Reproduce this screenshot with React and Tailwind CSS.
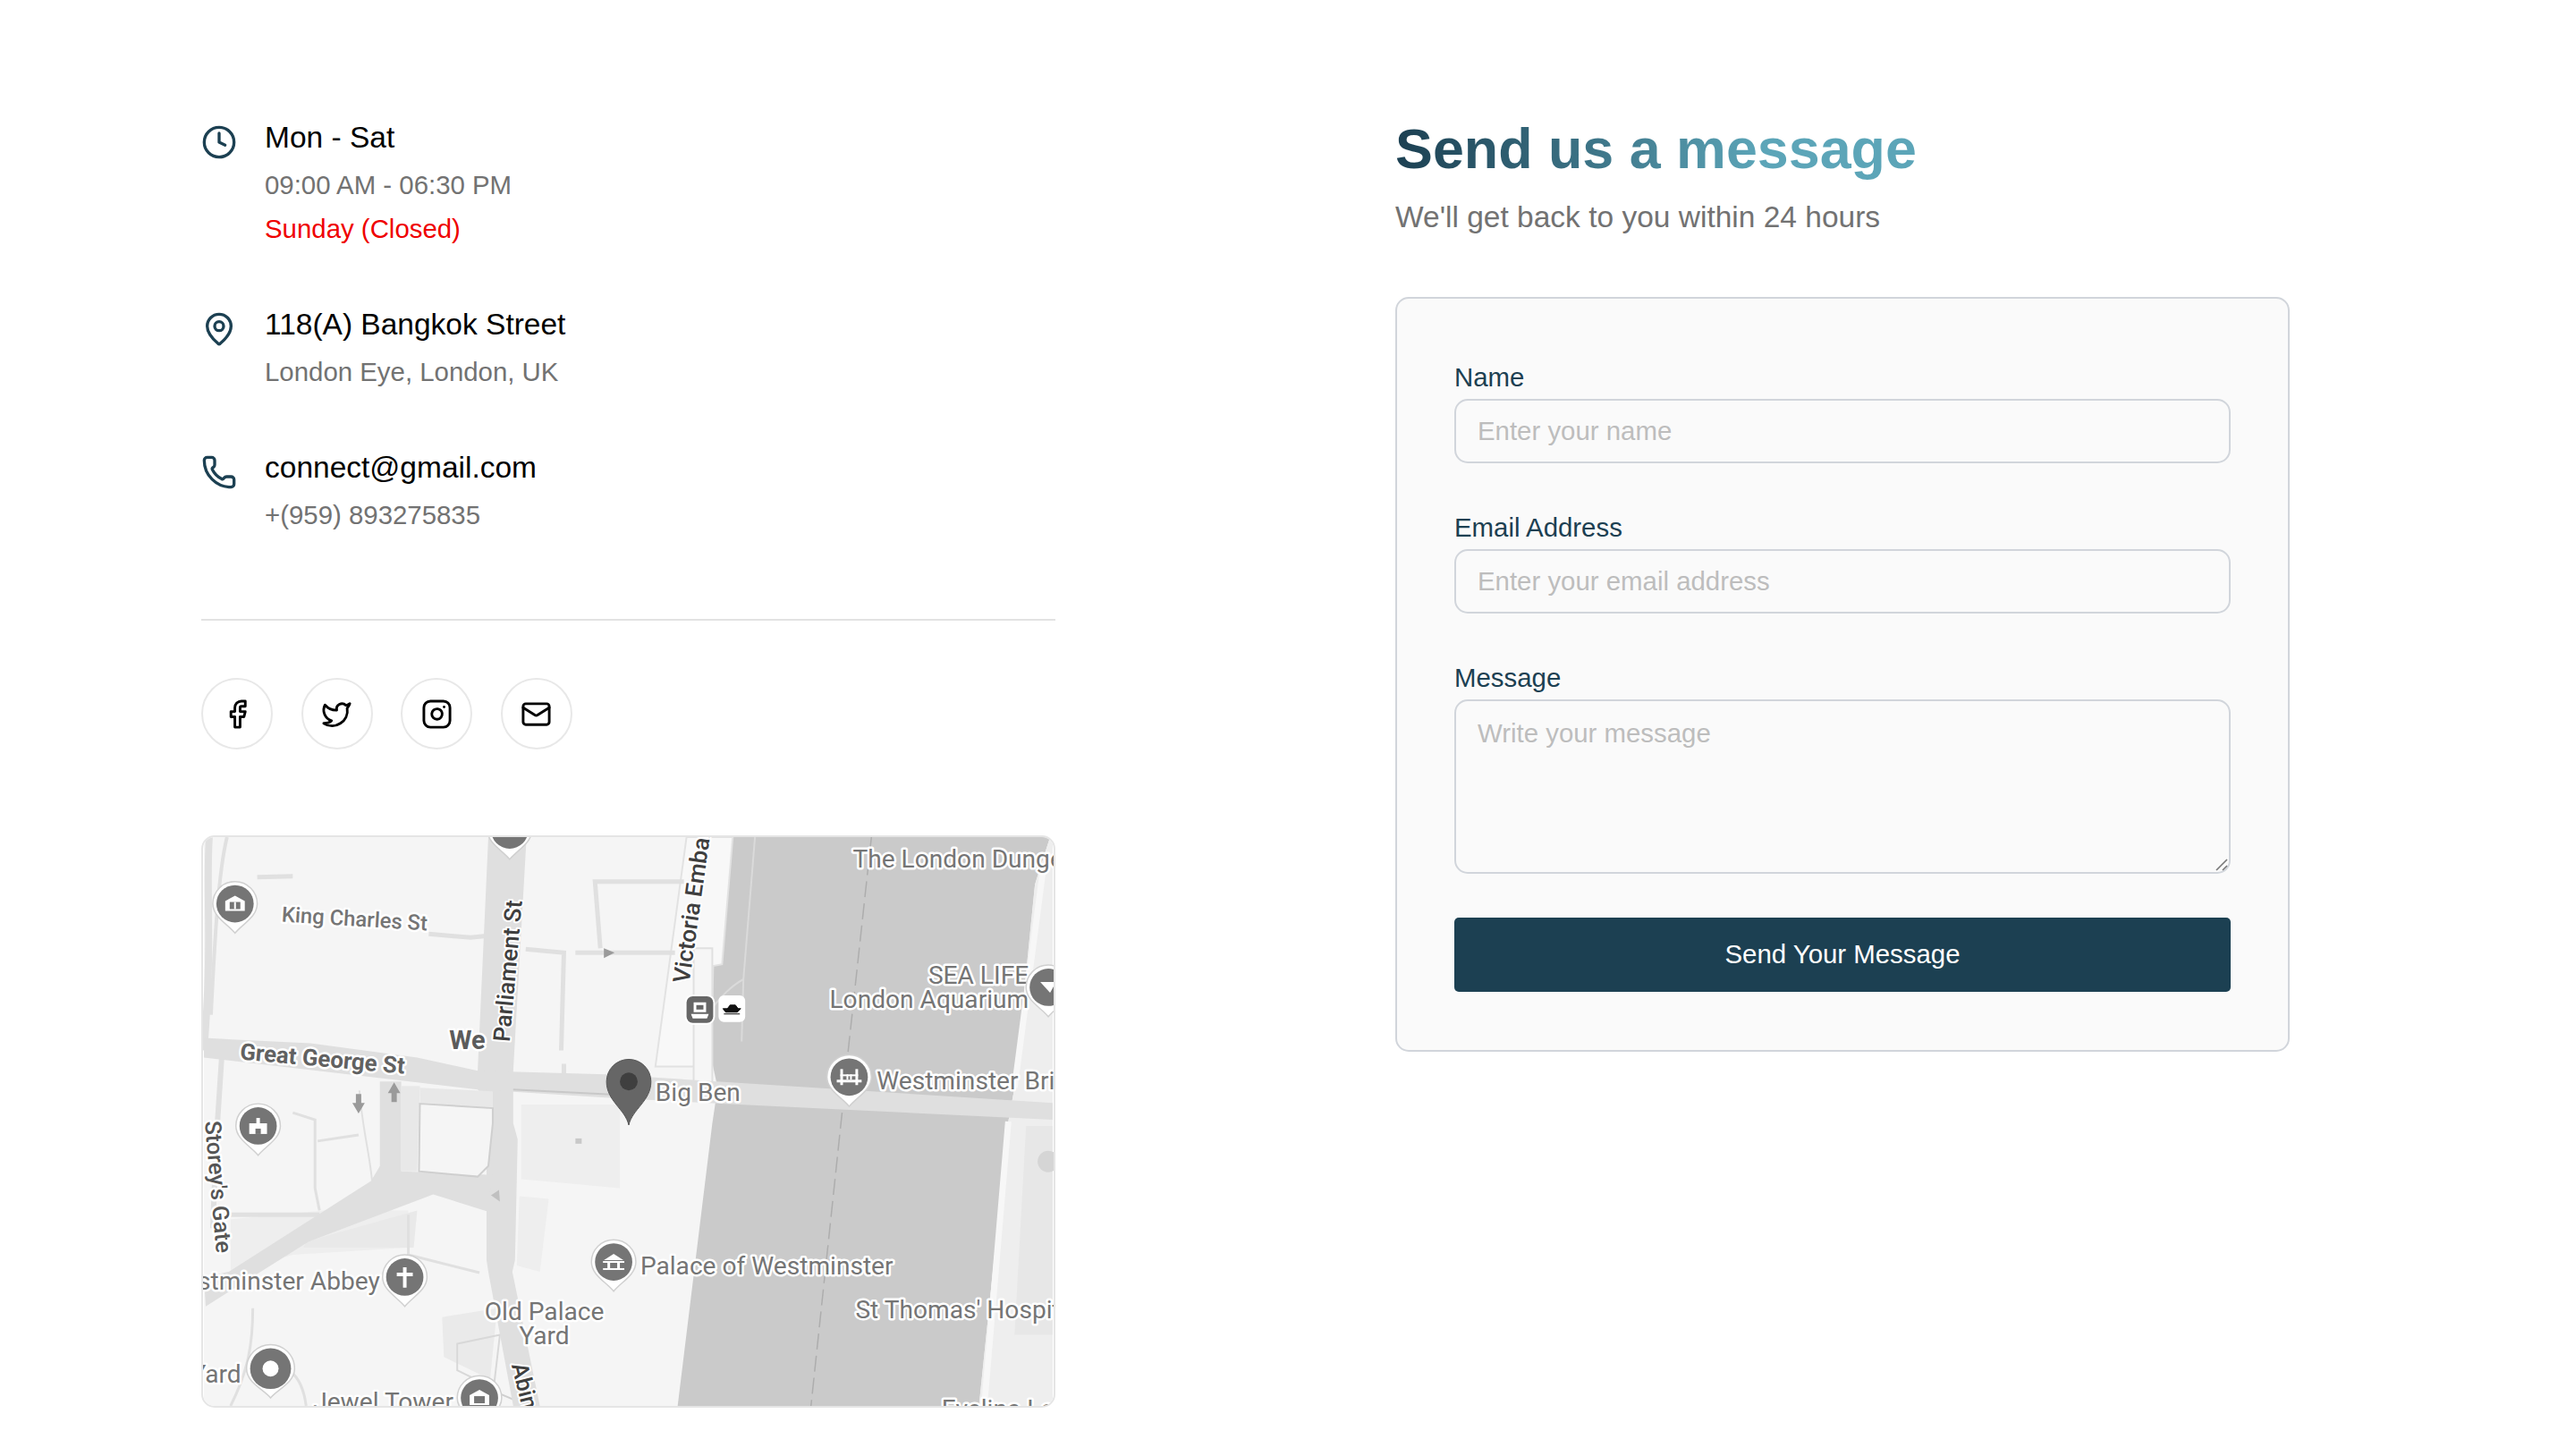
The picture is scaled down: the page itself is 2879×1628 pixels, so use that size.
import React from "react";
import { Clock, MapPin, Phone, Facebook, Twitter, Instagram, Mail } from "lucide-react";

const socials = [Facebook, Twitter, Instagram, Mail];

const InfoRow = ({ icon: Icon, title, children }) => (
  <div className="flex gap-[31px]">
    <Icon size={40} strokeWidth={2} className="mt-[9px] shrink-0 text-[#1c4052]" />
    <div>
      <p className="text-[33.5px] leading-[48px] text-black">{title}</p>
      {children}
    </div>
  </div>
);

const Sub = ({ className = "text-[#727272]", first, children }) => (
  <p className={`text-[29.4px] leading-[44px] ${first ? "mt-[7px]" : "mt-[5px]"} ${className}`}>{children}</p>
);

const Label = ({ x, y, size = 28.3, fill = "#757575", weight = 400, rotate, anchor = "start", halo = 5, children }) => (
  <text
    x={x}
    y={y}
    fontFamily="Roboto, sans-serif"
    fontSize={size}
    fontWeight={weight}
    fill={fill}
    stroke="#fff"
    strokeWidth={halo}
    paintOrder="stroke"
    strokeLinejoin="round"
    textAnchor={anchor}
    transform={rotate ? `rotate(${rotate} ${x} ${y})` : undefined}
  >
    {children}
  </text>
);

const Pin = ({ x, y, r = 21, tail = 31, children }) => (
  <g transform={`translate(${x} ${y})`}>
    <path
      d={`M${-r - 4} 0 A${r + 4} ${r + 4} 0 1 1 ${r + 4} 0 C${r + 4} ${r * 0.7} 8 ${tail - 8} 0 ${tail + 2} C-8 ${tail - 8} ${-r - 4} ${r * 0.7} ${-r - 4} 0Z`}
      fill="#fff"
      stroke="#d0d0d0"
      strokeWidth="1.5"
    />
    <circle r={r} fill="#757575" />
    {children}
  </g>
);

const MapArt = () => (
  <svg viewBox="0 0 955 640" className="block h-full w-full">
    <rect width="955" height="640" fill="#f5f5f5" />
    {/* river */}
    <path d="M595 0H952L935 53 912 282 905 320 872 640H533L572 322 578 282 570 245 573 145 583 143Z" fill="#cacaca" />
    {/* far bank and grounds */}
    <path d="M952 0H955V640H872L905 320 912 282 935 53Z" fill="#eeeeee" />
    <path d="M945 30L912 282M905 320L878 640" stroke="#f7f7f7" strokeWidth="7" fill="none" />
    <path d="M925 325L955 325V560L912 560Z" fill="#e7e7e7" />
    <circle cx="950" cy="365" r="12" fill="#d5d5d5" />
    <path d="M357 301L468 301 468 395 357 385Z" fill="#eeeeee" />
    <path d="M355 404L388 407 378 489 352 482Z" fill="#eeeeee" />
    <path d="M30 430L135 420 230 420 230 462 100 470 30 490Z" fill="#eeeeee" />
    <path d="M115 455L240 420 236 462 112 462Z" fill="#e9e9e9" />
    <path d="M268 540L330 530 322 610 270 585Z" fill="#eaeaea" />
    {/* embankment */}
    <path d="M543 0L508 258H570L573 145 583 143 595 0Z" fill="#f8f8f8" stroke="#e2e2e2" strokeWidth="2" />
    <path d="M620 0L607 160 605 230M607 160C592 168 582 180 572 192" stroke="#dadada" strokeWidth="2" fill="none" />
    <path d="M551 125H572V285H551Z" fill="#f6f6f6" stroke="#e0e0e0" strokeWidth="2" />
    {/* small lanes */}
    <g stroke="#e0e0e0" strokeWidth="5" fill="none">
      <path d="M6 0C2 60 10 120 0 240" strokeWidth="8" />
      <path d="M26 0C16 40 12 120 8 200" strokeWidth="4" />
      <path d="M60 45L100 44" />
      <path d="M253 109L300 113 320 111" />
      <path d="M362 126L405 130 402 240M405 255V280" strokeWidth="5" />
      <path d="M440 50L446 125 440 50H540" />
      <path d="M418 130H530" />
      <path d="M20 248L14 340 10 440" strokeWidth="6" />
      <path d="M100 310L125 318 125 395 130 420" strokeWidth="3" />
      <path d="M128 342L174 335" strokeWidth="3" />
      <path d="M175 285C178 330 190 370 190 400" strokeWidth="2" />
      <path d="M30 425H130" />
      <path d="M230 425V480M230 470L310 490" strokeWidth="3" />
      <path d="M55 530C55 570 50 600 30 640" strokeWidth="3" />
      <path d="M60 590C90 592 110 600 115 640" strokeWidth="3" />
      <path d="M285 570L333 560 326 620 285 600Z" strokeWidth="2" fill="none" stroke="#d8d8d8" />
      <path d="M330 625L365 640" strokeWidth="2" stroke="#cfcfcf" />
    </g>
    {/* roads */}
    <g fill="#dfdfdf">
      <path d="M320 0H363L348 263 348 322 353 340 350 476 347 489 378 640H348L320 489 318 476 318 340 325 322 325 300 308 284V263Z" />
      <path d="M0 226L120 232 240 248 308 263 452 267 955 299V318L602 301 452 293 308 284 240 276 0 248Z" />
      <path d="M198 275H222V376L325 380 318 421 258 402 118 455 2 528 0 495 28 489 188 387 198 370Z" />
      <path d="M222 280H243L240 376H222Z" fill="#e8e8e8" />
      <path d="M243 282L325 286V305L243 300Z" fill="#e8e8e8" />
    </g>
    <path d="M243 300L325 305 325 322 320 370 308 382 242 376Z" fill="#f5f5f5" stroke="#cfcfcf" strokeWidth="2" />
    <path d="M348 284L468 290" stroke="#c8c8c8" strokeWidth="2" />
    {/* river centre line */}
    <path d="M751 0L720 285M718 310L683 640" stroke="#adadad" strokeWidth="1.5" strokeDasharray="18 7" fill="none" />
    <g fill="#9a9a9a">
      <path d="M214 298L207 286H211V276H217V286H221Z" transform="rotate(180 214 287)" />
      <path d="M174 311L167 299H171V289H177V299H181Z" />
      <path d="M332 397L323 403 333 410Z" fill="#c0c0c0" />
      <path d="M450 125L462 130 450 136Z" />
      <rect x="418" y="339" width="7" height="6" fill="#c8c8c8" />
    </g>

    {/* street names */}
    <Label x={87} y={95} size={24} weight={500} rotate={3.5}>King Charles St</Label>
    <Label x={344} y={231} size={26.4} weight={500} fill="#3f3f3f" rotate={-85} halo={4}>Parliament St</Label>
    <Label x={276} y={238} size={29} weight={700} fill="#5c5c5c">We</Label>
    <Label x={40} y={250} size={26} weight={700} fill="#616161" rotate={5}>Great George St</Label>
    <Label x={1} y={320} size={25.5} weight={500} fill="#555" rotate={85}>Storey's Gate</Label>
    <Label x={198} y={509} anchor="end">Westminster Abbey</Label>
    <Label x={383} y={543} anchor="middle">Old Palace</Label>
    <Label x={383} y={571} anchor="middle">Yard</Label>
    <Label x={42} y={614} anchor="end">Dean's Yard</Label>
    <Label x={123} y={645}>Jewel Tower</Label>
    <Label x={346} y={594} size={26} weight={500} fill="#3f3f3f" rotate={76} halo={4}>Abingdon St</Label>
    <Label x={546} y={165} size={26.4} weight={500} fill="#3f3f3f" rotate={-82} halo={4}>Victoria Embankment</Label>
    <Label x={730} y={34}>The London Dungeon</Label>
    <Label x={928} y={165} anchor="end">SEA LIFE</Label>
    <Label x={928} y={192} anchor="end">London Aquarium</Label>
    <Label x={757} y={284}>Westminster Bridge</Label>
    <Label x={508} y={297}>Big Ben</Label>
    <Label x={491} y={492}>Palace of Westminster</Label>
    <Label x={733} y={541}>St Thomas' Hospital</Label>
    <Label x={830} y={653}>Evelina London</Label>

    {/* place pins */}
    <Pin x={344} y={-8} />
    <Pin x={35} y={75}>
      <path d="M-11 -3L0 -9 11 -3V8H-11Z" fill="#fff" />
      <rect x="-6" y="-2" width="12" height="8" fill="#757575" />
      <rect x="-1" y="-2" width="2" height="8" fill="#fff" />
    </Pin>
    <Pin x={61} y={325}>
      <rect x="-10" y="-3" width="20" height="12" fill="#fff" />
      <rect x="-2" y="-9" width="4" height="7" fill="#fff" />
      <rect x="-3" y="3" width="6" height="6" fill="#757575" />
    </Pin>
    <Pin x={226} y={495}>
      <path d="M-2 -11H2V-5H9V-1H2V12H-2V-1H-9V-5H-2Z" fill="#fff" />
    </Pin>
    <Pin x={75} y={598} r={23}>
      <circle r={9} fill="#fff" />
    </Pin>
    <Pin x={310} y={631}>
      <path d="M-11 -3L0 -9 11 -3V8H-11Z" fill="#fff" />
      <rect x="-6" y="-2" width="12" height="8" fill="#757575" />
    </Pin>
    <Pin x={461} y={478}>
      <path d="M-11 -2L0 -9 11 -2Z" fill="#fff" />
      <rect x="-12" y="-1" width="24" height="2" fill="#fff" />
      <rect x="-7" y="1" width="3" height="6" fill="#fff" />
      <rect x="4" y="1" width="3" height="6" fill="#fff" />
      <rect x="-12" y="7" width="24" height="2" fill="#fff" />
    </Pin>
    <Pin x={726} y={270}>
      <rect x="-10" y="-9" width="3" height="18" fill="#fff" />
      <rect x="7" y="-9" width="3" height="18" fill="#fff" />
      <rect x="-14" y="3" width="28" height="3" fill="#fff" />
      <rect x="-10" y="-3" width="20" height="2" fill="#fff" />
      <rect x="-3" y="-3" width="2" height="6" fill="#fff" />
      <rect x="1" y="-3" width="2" height="6" fill="#fff" />
    </Pin>
    <Pin x={950} y={169}>
      <path d="M-9 -6H9L2 6Z" fill="#fff" />
    </Pin>

    {/* ferry stop */}
    <rect x="542" y="178" width="32" height="32" rx="8" fill="#666" stroke="#fff" strokeWidth="2" />
    <path d="M551 186H565V197H551ZM548 199H568L566 204H550Z" fill="#fff" />
    <rect x="554" y="189" width="8" height="5" fill="#666" />
    <rect x="579" y="178" width="30" height="30" rx="6" fill="#fff" />
    <path d="M584 193H604L600 197H587ZM589 193L592 189H598L601 193ZM585 199H603" fill="#111" stroke="#111" strokeWidth="1" />

    {/* main marker */}
    <path d="M478 324C474 306 453 297 453 275A25 25 0 0 1 503 275C503 297 482 306 478 324Z" fill="#666" stroke="#555" strokeWidth="1" />
    <circle cx="478" cy="275" r="10" fill="#3f3f3f" />
  </svg>
);

const fieldClass =
  "block w-full rounded-[15px] border-2 border-[#d1d5db] bg-transparent px-[24px] text-[29.4px] text-[#333] outline-none placeholder:text-[#bdbdbd]";

const Field = ({ label, className = "mb-[50px]", children }) => (
  <div className={className}>
    <label className="mb-[2px] block text-[29.4px] leading-[44px] text-[#1c4052]">{label}</label>
    {children}
  </div>
);

export default function App() {
  return (
    <div
      className="flex min-h-[1628px] gap-[380px] bg-white pt-[130px] pl-[225px]"
      style={{ fontFamily: '"Liberation Sans", Arial, sans-serif' }}
    >
      <div className="w-[955px] shrink-0">
        <div className="flex flex-col gap-[61px] pb-[94px]">
          <InfoRow icon={Clock} title="Mon - Sat">
            <Sub first>09:00 AM - 06:30 PM</Sub>
            <Sub className="text-[#ef0000]">Sunday (Closed)</Sub>
          </InfoRow>
          <InfoRow icon={MapPin} title="118(A) Bangkok Street">
            <Sub first>London Eye, London, UK</Sub>
          </InfoRow>
          <InfoRow icon={Phone} title="connect@gmail.com">
            <Sub first>+(959) 893275835</Sub>
          </InfoRow>
        </div>
        <div className="border-t-2 border-[#e2e2e2] pt-[64px]">
          <div className="flex gap-[31.5px]">
            {socials.map((Icon, i) => (
              <a key={i} className="flex h-[80px] w-[80px] items-center justify-center rounded-full border-2 border-[#e8e8e8] text-black">
                <Icon size={35} strokeWidth={2} />
              </a>
            ))}
          </div>
        </div>
        <div className="mt-[96px] h-[640px] overflow-hidden rounded-[15px] border-2 border-[#e5e5e5]">
          <MapArt />
        </div>
      </div>

      <div className="w-[1000px] shrink-0">
        <h1 className="w-fit bg-gradient-to-r from-[#1c4052] to-[#5ca5b8] to-70% bg-clip-text text-[62.8px] leading-[72px] font-bold text-transparent">
          Send us a message
        </h1>
        <p className="mt-[19px] mb-[67px] text-[33.5px] leading-[44px] text-[#727272]">We'll get back to you within 24 hours</p>
        <form className="rounded-[15px] border-2 border-[#d1d5db] bg-[#fafafa] px-[64px] pt-[66px] pb-[65px]">
          <Field label="Name">
            <input type="text" placeholder="Enter your name" className={`${fieldClass} h-[72px]`} />
          </Field>
          <Field label="Email Address">
            <input type="email" placeholder="Enter your email address" className={`${fieldClass} h-[72px]`} />
          </Field>
          <Field label="Message" className="mb-[49px]">
            <div className="relative">
              <textarea placeholder="Write your message" className={`${fieldClass} h-[195px] resize-none py-[14px] leading-[44px]`} />
              <svg viewBox="0 0 14 14" className="pointer-events-none absolute right-[3px] bottom-[3px] h-[14px] w-[14px]">
                <path d="M1 13L13 1M8 13L13 8" stroke="#777" strokeWidth="1.6" />
              </svg>
            </div>
          </Field>
          <button type="button" className="h-[83px] w-full rounded-[5px] bg-[#1c4052] text-[29.4px] text-white">
            Send Your Message
          </button>
        </form>
      </div>
    </div>
  );
}
